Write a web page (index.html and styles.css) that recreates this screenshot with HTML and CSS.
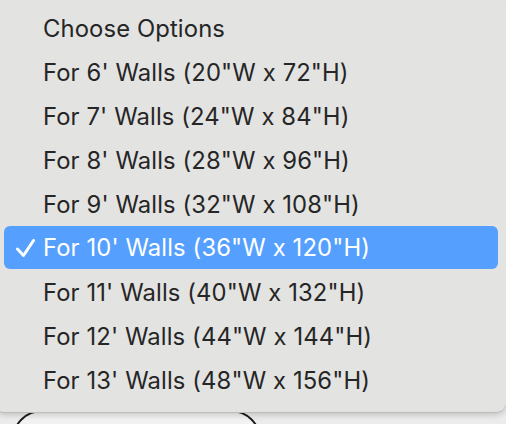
FILE: index.html
```html
<!DOCTYPE html>
<html>
<head>
<meta charset="utf-8">
<link rel="stylesheet" href="styles.css">
</head>
<body>
<div class="page">
  <button class="pill" type="button"></button>
</div>
<ul class="menu">
  <li class="item">Choose Options</li>
  <li class="item">For 6' Walls (20"W x 72"H)</li>
  <li class="item">For 7' Walls (24"W x 84"H)</li>
  <li class="item">For 8' Walls (28"W x 96"H)</li>
  <li class="item">For 9' Walls (32"W x 108"H)</li>
  <li class="item selected"><svg class="check" width="20" height="20" viewBox="0 0 20 20"><path d="M1.5 11 L7.5 17.5 L17.5 2.5" fill="none" stroke="#fff" stroke-width="3" stroke-linecap="round" stroke-linejoin="round"/></svg>For 10' Walls (36"W x 120"H)</li>
  <li class="item">For 11' Walls (40"W x 132"H)</li>
  <li class="item">For 12' Walls (44"W x 144"H)</li>
  <li class="item">For 13' Walls (48"W x 156"H)</li>
</ul>
</body>
</html>
```
FILE: styles.css
```css
html, body {
  margin: 0;
  padding: 0;
}
body {
  width: 506px;
  height: 424px;
  overflow: hidden;
  position: relative;
  background: #ececec;
  font-family: Inter, "Noto Sans", sans-serif;
}
.page {
  height: 424px;
  overflow: hidden;
  box-sizing: border-box;
  padding: 410px 0 0 12px;
}
.pill {
  display: block;
  width: 249px;
  height: 60px;
  border: 2px solid #1c1c1c;
  border-radius: 30px;
  background: #f2f2f2;
}
.menu {
  position: absolute;
  left: -6px;
  top: -6px;
  right: 0;
  margin: 0;
  padding: 12px 0 10px;
  list-style: none;
  background: #e3e3e2;
  border-radius: 10px;
  border-bottom: 1px solid #bdbdbd;
  box-shadow: 0 2px 6px rgba(0, 0, 0, 0.18);
}
.item {
  height: 44px;
  display: flex;
  align-items: center;
  padding-left: 49px;
  font-size: 23.8px;
  letter-spacing: 0.12px;
  color: #262626;
  position: relative;
}
.selected {
  background: #55a0fe;
  color: #fff;
  margin: 0 8px 1px 10px;
  padding-left: 39px;
  border-radius: 6px;
  height: 43px;
}
.check {
  position: absolute;
  left: 12px;
  top: 12px;
}
```
